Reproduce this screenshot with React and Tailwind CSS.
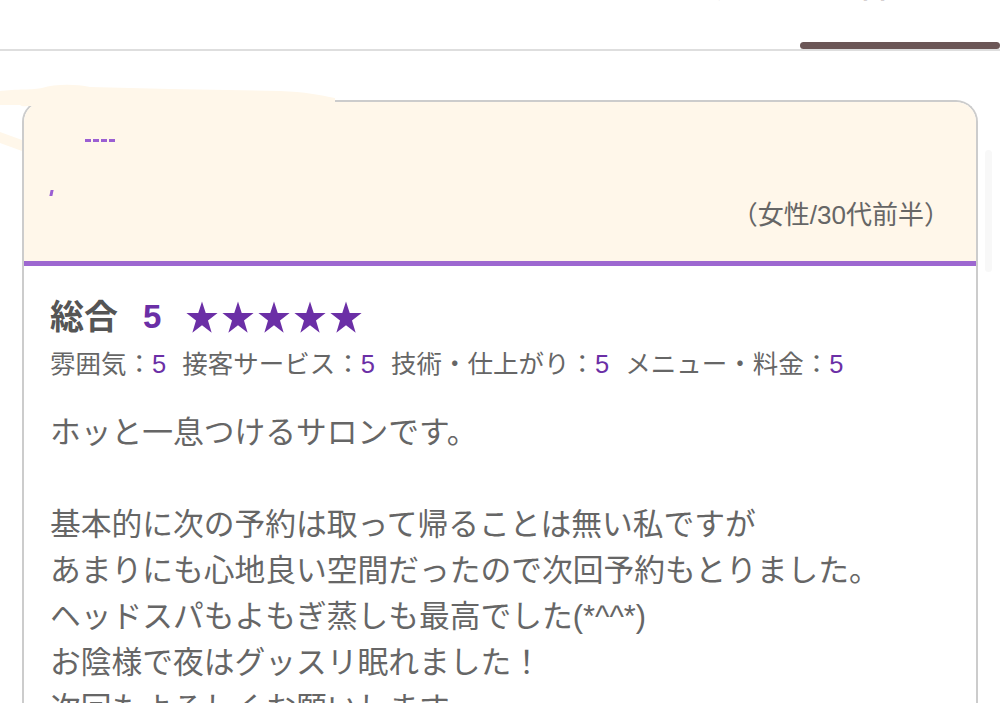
import { Fragment } from 'react'

const tabs = ['サロントップ', 'クーポン・メニュー', 'スタイル', 'ブログ', '口コミ']

const ratings = [
  ['雰囲気', 5],
  ['接客サービス', 5],
  ['技術・仕上がり', 5],
  ['メニュー・料金', 5],
]

const lines = [
  'ホッと一息つけるサロンです。',
  '',
  '基本的に次の予約は取って帰ることは無い私ですが',
  'あまりにも心地良い空間だったので次回予約もとりました。',
  'ヘッドスパもよもぎ蒸しも最高でした(*^^*)',
  'お陰様で夜はグッスリ眠れました！',
  '次回もよろしくお願いします。',
]

function Star() {
  return (
    <svg width="32" height="33" viewBox="0 0 24 23" preserveAspectRatio="none" className="shrink-0">
      <path d="M12 0.3l2.8 8.1h8.9l-7.2 5.2 2.75 8.5L12 16.9l-7.25 5.2 2.75-8.5L0.3 8.4h8.9z" fill="#6b2fa6" />
    </svg>
  )
}

export default function App() {
  return (
    <div className="relative h-[703px] overflow-hidden bg-white font-['Liberation_Sans','Noto_Sans_CJK_JP',sans-serif]">
      {/* tab bar, labels mostly scrolled out of view */}
      <div className="flex h-[51px] border-b-2 border-[#dedede]">
        {tabs.map((tab, i) => (
          <div key={tab} className="flex min-w-0 flex-1 basis-0 flex-col justify-between overflow-hidden">
            <div className={`-mt-[24px] whitespace-nowrap text-center text-[26px] leading-[26px] ${i === 4 ? 'font-bold text-[#5e4a4a]' : 'text-[#8a8a8a]'}`}>{tab}</div>
            {i === 4 ? <div className="h-[7px] rounded-full bg-[#6b5656]" /> : null}
          </div>
        ))}
      </div>

      <div className="mx-[22px] mt-[49px] rounded-t-[22px] border-2 border-b-0 border-[#cccccc]">
        <div className="rounded-t-[20px] border-b-[5px] border-[#9d68d0] bg-[#fff7ea] px-[26px] pb-[29px] pt-[37px]">
          <div className="ml-[35px] h-[3px] w-[30px] border-b-[3px] border-dashed border-[#9b5fd3]" />
          <div className="mt-[48px] h-[6px] w-[3px] skew-x-[-12deg] bg-[#9b5fd3]" />
          <div className="mt-[3px] text-right text-[26px] leading-[33px] text-[#666666]">（女性/30代前半）</div>
        </div>

        <div className="px-[26px] pt-[31px]">
          <div className="flex h-[40px] items-center">
            <span className="text-[34px] font-bold leading-[40px] text-[#555555]">総合</span>
            <span className="ml-[25px] text-[33px] font-bold leading-[40px] text-[#6b2fa6]">5</span>
            <div className="ml-[25px] flex gap-[4px]">
              <Star />
              <Star />
              <Star />
              <Star />
              <Star />
            </div>
          </div>

          <div className="mt-[11px] flex text-[25.5px] leading-[32px] text-[#666666]">
            {ratings.map(([label, score]) => (
              <span key={label} className="mr-[16px]">
                {label}：<span className="text-[#6b2fa6]">{score}</span>
              </span>
            ))}
          </div>

          <div className="mt-[30px] text-[30.75px] leading-[46px] text-[#666666]">
            {lines.map((line, i) => (
              <Fragment key={i}>
                <div className="h-[46px] whitespace-nowrap">{line}</div>
              </Fragment>
            ))}
          </div>
        </div>
      </div>

      {/* redaction smear over the card corner */}
      <svg className="absolute left-0 top-0" width="340" height="160" viewBox="0 0 340 160">
        <path d="M0 91 C15 89 35 90 42 88 C55 84 75 84 90 87 L170 89 L280 91 C305 92 320 95 335 98 L335 106 L28 106 C26 106 22 107 20 105 L0 105 Z" fill="#fff7ea" />
        <path d="M0 132 L22 140 L22 151 L0 143 Z" fill="#fff7ea" />
      </svg>
      <div className="absolute left-[985px] top-[150px] h-[122px] w-[7px] rounded-full bg-[#f8f8f8]" />
    </div>
  )
}
